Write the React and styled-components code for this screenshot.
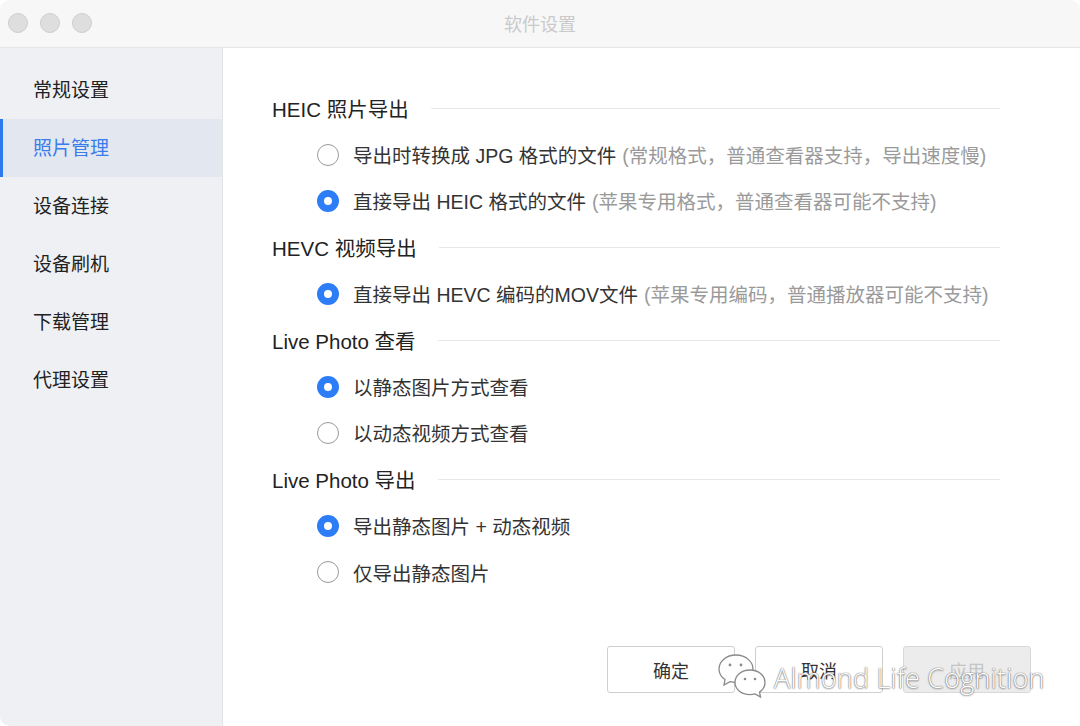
import React from "react";
import styled, { createGlobalStyle } from "styled-components";

const Global = createGlobalStyle`
  html, body { margin: 0; padding: 0; background: #ffffff; }
  body { font-family: "Liberation Sans", "Noto Sans CJK SC", sans-serif; }
  * { box-sizing: border-box; }
`;

const Window = styled.div`
  position: relative;
  width: 1080px;
  height: 726px;
  border-radius: 10px;
  overflow: hidden;
  background: #ffffff;
  display: flex;
  flex-direction: column;
`;

const TitleBar = styled.div`
  height: 48px;
  flex: none;
  background: #f7f7f7;
  border-bottom: 1px solid #e6e6e6;
  display: flex;
  align-items: center;
  position: relative;
  padding-left: 8px;
`;

const Lights = styled.div`
  display: flex;
  gap: 12px;
  margin-top: -1px;
`;

const Light = styled.span`
  width: 20px;
  height: 20px;
  border-radius: 50%;
  background: #dedede;
  border: 1px solid #cfcfcf;
`;

const Title = styled.div`
  position: absolute;
  left: 0;
  right: 0;
  top: 0;
  height: 46px;
  display: flex;
  align-items: center;
  justify-content: center;
  font-size: 18px;
  color: #cacaca;
  font-family: "Noto Sans CJK SC", sans-serif;
`;

const Body = styled.div`
  flex: 1;
  display: flex;
  min-height: 0;
`;

const Sidebar = styled.nav`
  width: 223px;
  flex: none;
  background: #eff0f4;
  border-right: 1px solid #e2e3e6;
  padding-top: 13px;
  display: flex;
  flex-direction: column;
`;

const NavItem = styled.div`
  height: 58px;
  display: flex;
  align-items: center;
  font-size: 19px;
  font-family: "Noto Sans CJK SC", sans-serif;
  color: ${(p) => (p.$active ? "#3b7cec" : "#222")};
  background: ${(p) => (p.$active ? "#e3e7ef" : "transparent")};
  border-left: 3px solid ${(p) => (p.$active ? "#2f77ef" : "transparent")};
  padding-left: 30px;
  padding-bottom: 3px;
`;

const Main = styled.main`
  flex: 1;
  display: flex;
  flex-direction: column;
  padding: 37px 49px 33px 49px;
`;

const Section = styled.section`
  display: flex;
  flex-direction: column;
  padding-right: 31px;
`;

const Heading = styled.div`
  height: 46.4px;
  display: flex;
  align-items: center;
  gap: 22px;
  font-size: 20.5px;
  color: #222;
  &::after {
    content: "";
    flex: 1;
    height: 1px;
    background: #e8e8e8;
  }
`;

const Option = styled.label`
  height: 46.4px;
  display: flex;
  align-items: center;
  padding-left: 45px;
  gap: 14px;
  font-size: 19.5px;
  color: #333;
`;

const Radio = styled.span`
  width: 22px;
  height: 22px;
  border-radius: 50%;
  flex: none;
  border: ${(p) => (p.$checked ? "7px solid #2c7df6" : "1.5px solid #9a9a9a")};
  background: #fff;
`;

const Hint = styled.span`
  color: #9a9a9a;
  margin-left: 6px;
`;

const Footer = styled.div`
  margin-top: auto;
  display: flex;
  justify-content: flex-end;
  gap: 20px;
`;

const Button = styled.button`
  width: 128px;
  height: 47px;
  border-radius: 3px;
  border: 1px solid ${(p) => (p.$disabled ? "#d8d8d8" : "#cfcfcf")};
  background: ${(p) => (p.$disabled ? "#ececec" : "#ffffff")};
  color: ${(p) => (p.$disabled ? "#c4c4c4" : "#333")};
  font-size: 18px;
  font-family: "Noto Sans CJK SC", sans-serif;
`;

const Watermark = styled.div`
  position: absolute;
  left: 716px;
  top: 652px;
  display: flex;
  align-items: center;
  gap: 4px;
  pointer-events: none;
`;

const WatermarkText = styled.span`
  font-family: "Open Sans", sans-serif;
  font-weight: 300;
  font-size: 27px;
  color: #ffffff;
  text-shadow: 0 0 1px #7a7a7a, 0 0 1px #7a7a7a, 0 1px 2px rgba(0,0,0,0.35);
  letter-spacing: 0.2px;
`;

const sections = [
  {
    title: "HEIC 照片导出",
    options: [
      { text: "导出时转换成 JPG 格式的文件", hint: "(常规格式，普通查看器支持，导出速度慢)" },
      { text: "直接导出 HEIC 格式的文件", hint: "(苹果专用格式，普通查看器可能不支持)", checked: true },
    ],
  },
  {
    title: "HEVC 视频导出",
    options: [{ text: "直接导出 HEVC 编码的MOV文件", hint: "(苹果专用编码，普通播放器可能不支持)", checked: true }],
  },
  {
    title: "Live Photo 查看",
    options: [{ text: "以静态图片方式查看", checked: true }, { text: "以动态视频方式查看" }],
  },
  {
    title: "Live Photo 导出",
    options: [{ text: "导出静态图片 + 动态视频", checked: true }, { text: "仅导出静态图片" }],
  },
];

const nav = ["常规设置", "照片管理", "设备连接", "设备刷机", "下载管理", "代理设置"];

function WeChatIcon() {
  return (
    <svg width="54" height="50" viewBox="0 0 54 50">
      <g fill="#fff" stroke="#8a8a8a" strokeWidth="1.3">
        <path d="M20 3C10 3 3 9.5 3 17c0 4.3 2.3 8 6 10.5L8 33l6-3.3c1.8.5 3.8.8 6 .8 10 0 17-6.5 17-13.5S30 3 20 3z" />
        <path d="M34 18c-9 0-15 5.6-15 12.3S25 42.6 34 42.6c1.8 0 3.4-.2 5-.7l5.5 3-1-4.8c3.3-2.2 5.5-5.6 5.5-9.3C49 23.6 43 18 34 18z" />
      </g>
      <g fill="#8a8a8a">
        <circle cx="14" cy="13" r="1.4" />
        <circle cx="25" cy="13" r="1.4" />
        <circle cx="29" cy="27" r="1.3" />
        <circle cx="39" cy="27" r="1.3" />
      </g>
    </svg>
  );
}

export default function App() {
  return (
    <>
      <Global />
      <Window>
        <TitleBar>
          <Lights>
            <Light />
            <Light />
            <Light />
          </Lights>
          <Title>软件设置</Title>
        </TitleBar>
        <Body>
          <Sidebar>
            {nav.map((n) => (
              <NavItem key={n} $active={n === "照片管理"}>
                {n}
              </NavItem>
            ))}
          </Sidebar>
          <Main>
            {sections.map((s) => (
              <Section key={s.title}>
                <Heading>{s.title}</Heading>
                {s.options.map((o) => (
                  <Option key={o.text}>
                    <Radio $checked={o.checked} />
                    <span>
                      {o.text}
                      {o.hint && <Hint>{o.hint}</Hint>}
                    </span>
                  </Option>
                ))}
              </Section>
            ))}
            <Footer>
              <Button>确定</Button>
              <Button>取消</Button>
              <Button $disabled>应用</Button>
            </Footer>
          </Main>
        </Body>
        <Watermark>
          <WeChatIcon />
          <WatermarkText>Almond Life Cognition</WatermarkText>
        </Watermark>
      </Window>
    </>
  );
}
